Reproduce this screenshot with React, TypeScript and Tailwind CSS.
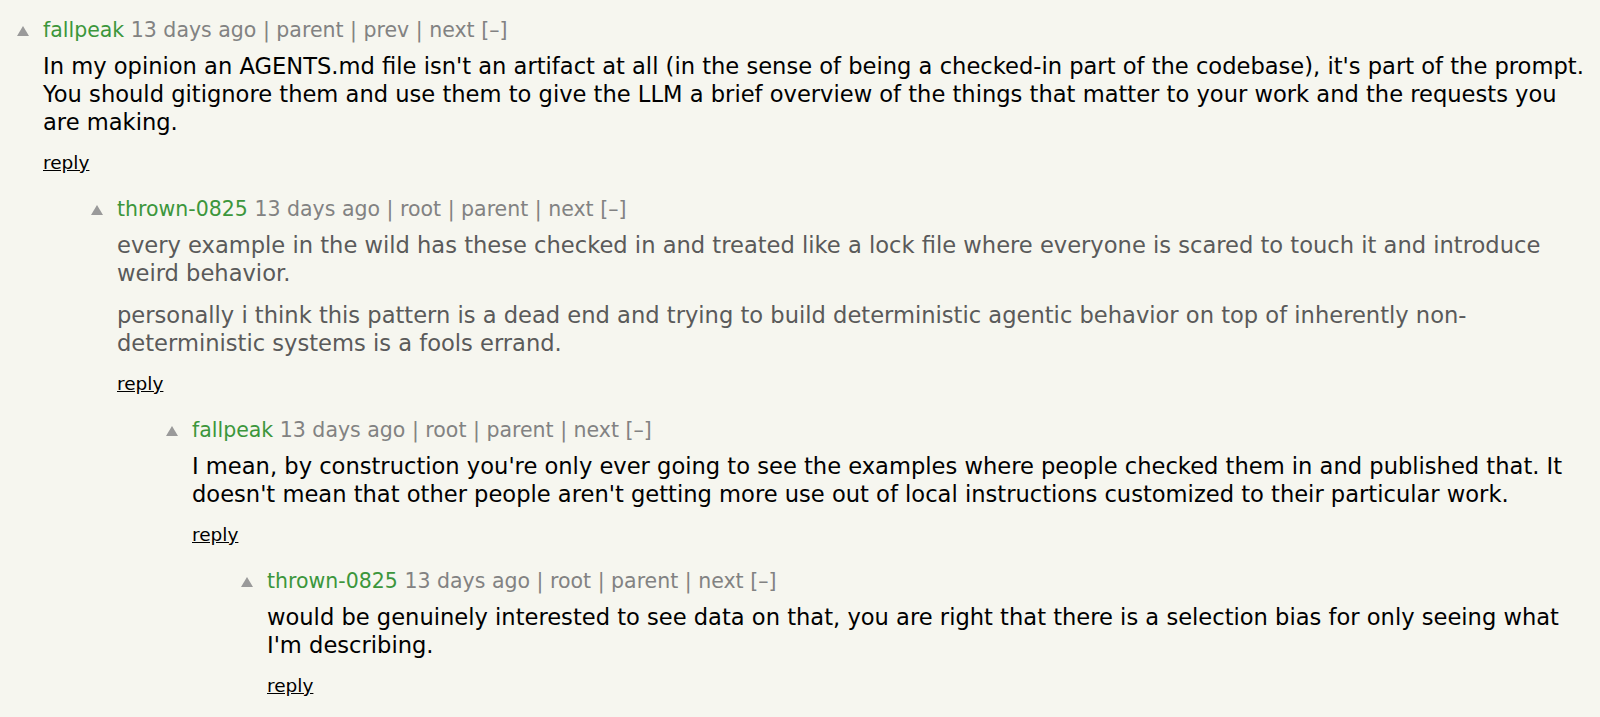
import React from 'react';

interface Comment {
  id: number;
  level: number;
  user: string;
  age: string;
  links: string[];
  paragraphs: string[];
  faded?: boolean;
}

const comments: Comment[] = [
  {
    id: 1,
    level: 0,
    user: 'fallpeak',
    age: '13 days ago',
    links: ['parent', 'prev', 'next'],
    paragraphs: [
      "In my opinion an AGENTS.md file isn't an artifact at all (in the sense of being a checked-in part of the codebase), it's part of the prompt. You should gitignore them and use them to give the LLM a brief overview of the things that matter to your work and the requests you are making.",
    ],
  },
  {
    id: 2,
    level: 1,
    user: 'thrown-0825',
    age: '13 days ago',
    links: ['root', 'parent', 'next'],
    faded: true,
    paragraphs: [
      'every example in the wild has these checked in and treated like a lock file where everyone is scared to touch it and introduce weird behavior.',
      'personally i think this pattern is a dead end and trying to build deterministic agentic behavior on top of inherently non-deterministic systems is a fools errand.',
    ],
  },
  {
    id: 3,
    level: 2,
    user: 'fallpeak',
    age: '13 days ago',
    links: ['root', 'parent', 'next'],
    paragraphs: [
      "I mean, by construction you're only ever going to see the examples where people checked them in and published that. It doesn't mean that other people aren't getting more use out of local instructions customized to their particular work.",
    ],
  },
  {
    id: 4,
    level: 3,
    user: 'thrown-0825',
    age: '13 days ago',
    links: ['root', 'parent', 'next'],
    paragraphs: [
      "would be genuinely interested to see data on that, you are right that there is a selection bias for only seeing what I'm describing.",
    ],
  },
];

const indents = ['w-0', 'w-[74px]', 'w-[149px]', 'w-[224px]'];

function Comment({ c }: { c: Comment }) {
  return (
    <div className="flex">
      <div className={`${indents[c.level]} shrink-0`} />
      {/* vote arrow */}
      <div className="w-[43px] shrink-0 flex justify-center pt-[9px] pl-[2px]">
        <svg width="12" height="10" viewBox="0 0 12 10">
          <polygon points="6,0 12,10 0,10" fill="#9a9a9a" />
        </svg>
      </div>
      <div className="flex-1 min-w-0 pr-[6px]">
        <div className="text-[20.5px] leading-[26px] text-[#828282] whitespace-nowrap">
          <span className="text-[#3c963c]">{c.user}</span> {c.age}
          {c.links.map((l) => (
            <span key={l}> | {l}</span>
          ))}{' '}
          [–]
        </div>
        <div
          className={`mt-[9px] text-[22.6px] leading-[28px] ${
            c.faded ? 'text-[#5a5a5a]' : 'text-black'
          }`}
        >
          {c.paragraphs.map((p, i) => (
            <p key={i} className={i > 0 ? 'mt-[14px]' : ''}>
              {p}
            </p>
          ))}
        </div>
        <div className="mt-[15px] text-[18.5px] leading-[24px] text-black underline">
          reply
        </div>
      </div>
    </div>
  );
}

export default function App() {
  return (
    <div
      className="min-h-screen bg-[#f6f6ef] pt-[17px]"
      style={{ fontFamily: '"DejaVu Sans", Verdana, sans-serif' }}
    >
      <div className="flex flex-col gap-[21px]">
        {comments.map((c) => (
          <Comment key={c.id} c={c} />
        ))}
      </div>
    </div>
  );
}
